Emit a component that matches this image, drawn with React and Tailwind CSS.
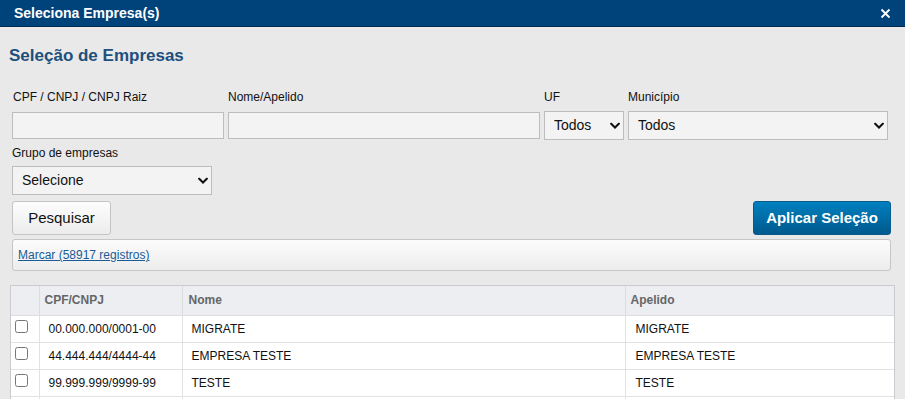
import React from "react";

const Chevron = ({ className = "" }) => (
  <svg className={className} width="10" height="7" viewBox="0 0 10 7" fill="none">
    <path d="M1.2 1.2 L5 5 L8.8 1.2" stroke="#111" strokeWidth="2" strokeLinecap="square" />
  </svg>
);

const Select = ({ value, className = "", chevronRight = "right-[4px]" }) => (
  <div className={`relative ${className}`}>
    <select
      defaultValue={value}
      className="w-full h-full appearance-none bg-[#f3f3f3] border border-[#bdbdbd] pl-[9px] text-[14px] text-[#111] outline-none"
    >
      <option>{value}</option>
    </select>
    <Chevron className={`absolute ${chevronRight} top-1/2 -translate-y-1/2 pointer-events-none`} />
  </div>
);

const rows = [
  ["00.000.000/0001-00", "MIGRATE", "MIGRATE"],
  ["44.444.444/4444-44", "EMPRESA TESTE", "EMPRESA TESTE"],
  ["99.999.999/9999-99", "TESTE", "TESTE"],
];

export default function App() {
  return (
    <div
      className="w-[905px] h-[399px] overflow-hidden bg-[#e9e9e9]"
      style={{ fontFamily: '"Liberation Sans", Arial, sans-serif' }}
    >
      <div className="h-[27px] bg-[#00437a] border-b border-[#002b52] flex items-center justify-between pl-[14px] pr-[14px]">
        <span className="text-white font-bold text-[14px]">Seleciona Empresa(s)</span>
        <svg width="11" height="11" viewBox="0 0 11 11">
          <path d="M1.5 1.5 L9.5 9.5 M9.5 1.5 L1.5 9.5" stroke="#fff" strokeWidth="1.8" />
        </svg>
      </div>

      <div className="px-[12px]">
        <h1 className="mt-[18px] ml-[-3px] text-[17px] leading-[22px] font-bold text-[#1d4f7c]">
          Seleção de Empresas
        </h1>

        <div className="flex mt-[23px] gap-[4px]">
          <div className="w-[212px] flex flex-col">
            <label className="text-[12px] leading-[14px] text-[#111] pl-[1px]">CPF / CNPJ / CNPJ Raiz</label>
            <input className="mt-[8px] h-[27px] bg-[#f3f3f3] border border-[#bdbdbd] outline-none" />
          </div>
          <div className="w-[312px] flex flex-col">
            <label className="text-[12px] leading-[14px] text-[#111]">Nome/Apelido</label>
            <input className="mt-[8px] h-[27px] bg-[#f3f3f3] border border-[#bdbdbd] outline-none" />
          </div>
          <div className="w-[80px] flex flex-col">
            <label className="text-[12px] leading-[14px] text-[#111]">UF</label>
            <Select value="Todos" className="mt-[7px] h-[29px]" />
          </div>
          <div className="w-[260px] flex flex-col">
            <label className="text-[12px] leading-[14px] text-[#111]">Município</label>
            <Select value="Todos" className="mt-[7px] h-[29px]" />
          </div>
        </div>

        <div className="mt-[6px] flex flex-col w-[200px]">
          <label className="text-[12px] leading-[14px] text-[#111]">Grupo de empresas</label>
          <Select value="Selecione" className="mt-[6px] h-[29px]" />
        </div>

        <div className="mt-[6px] flex justify-between items-center">
          <button className="w-[99px] h-[34px] rounded-[3px] border border-[#c4c4c4] bg-gradient-to-b from-[#fdfdfd] to-[#ececec] text-[15px] text-[#111]">
            Pesquisar
          </button>
          <button className="mr-[2px] w-[138px] h-[34px] rounded-[3px] border border-[#0a5a8c] bg-gradient-to-b from-[#0080bf] to-[#005a8e] text-white font-bold text-[15px]">
            Aplicar Seleção
          </button>
        </div>

        <div className="mt-[4px] mr-[2px] h-[32px] rounded-[3px] border border-[#c6c6c6] bg-gradient-to-b from-[#fcfcfc] to-[#ececec] flex items-center pl-[5px]">
          <a href="#" className="text-[12px] text-[#1a5b97] underline">Marcar (58917 registros)</a>
        </div>
      </div>

      <div className="mt-[14px] ml-[10px] w-[885px] border border-[#c9cbd0] bg-white">
        <table className="w-full border-collapse text-[12px]">
          <thead>
            <tr className="h-[29px] bg-[#eceef2] border-b border-[#dcdcdc]">
              <th className="w-[28px] border-r border-[#dcdcdc]"></th>
              <th className="w-[143px] text-left pl-[5px] font-bold text-[#666] border-r border-[#dcdcdc]">CPF/CNPJ</th>
              <th className="w-[443px] text-left pl-[6px] font-bold text-[#666] border-r border-[#dcdcdc]">Nome</th>
              <th className="text-left pl-[5px] font-bold text-[#666]">Apelido</th>
            </tr>
          </thead>
          <tbody>
            {rows.map((r, i) => (
              <tr key={i} className="h-[27px] border-b border-[#e2e2e2] text-[#111]">
                <td className="border-r border-[#e2e2e2] align-top pt-[4px] pl-[4px]">
                  <input type="checkbox" className="w-[13px] h-[13px] m-0 block" />
                </td>
                <td className="pl-[9px] border-r border-[#e2e2e2]">{r[0]}</td>
                <td className="pl-[9px] border-r border-[#e2e2e2]">{r[1]}</td>
                <td className="pl-[10px]">{r[2]}</td>
              </tr>
            ))}
            <tr className="h-[27px]">
              <td className="border-r border-[#e2e2e2]"></td>
              <td className="border-r border-[#e2e2e2]"></td>
              <td className="border-r border-[#e2e2e2]"></td>
              <td></td>
            </tr>
          </tbody>
        </table>
      </div>
    </div>
  );
}
